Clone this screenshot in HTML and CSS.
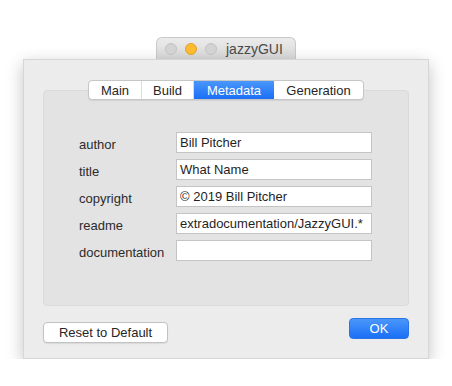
FILE: index.html
```html
<!DOCTYPE html>
<html lang="en">
<head>
    <meta charset="UTF-8">
    <meta name="viewport" content="width=device-width, initial-scale=1.0">
    <title>jazzyGUI</title>
    <link rel="stylesheet" href="styles.css">
</head>
<body>
    <div class="stage">
        <div class="titletab">
            <span class="light"></span>
            <span class="light yellow"></span>
            <span class="light"></span>
            <span class="title">jazzyGUI</span>
        </div>

        <div class="window">
            <div class="tabs">
                <span class="tab tab-main">Main</span>
                <span class="tab tab-build">Build</span>
                <span class="tab tab-meta selected">Metadata</span>
                <span class="tab tab-gen">Generation</span>
            </div>

            <div class="panel">
                <div class="form">
                    <label>author</label>
                    <div class="field">Bill Pitcher</div>
                    <label>title</label>
                    <div class="field">What Name</div>
                    <label>copyright</label>
                    <div class="field">© 2019 Bill Pitcher</div>
                    <label>readme</label>
                    <div class="field">extradocumentation/JazzyGUI.*</div>
                    <label>documentation</label>
                    <div class="field"></div>
                </div>
            </div>

            <div class="actions">
                <button class="button reset">Reset to Default</button>
                <button class="button ok">OK</button>
            </div>
        </div>
    </div>
</body>
</html>
```

FILE: styles.css
```css
body {
    margin: 0;
    background: #ffffff;
    font-family: "Liberation Sans", Arial, sans-serif;
    font-size: 13px;
    color: #262626;
}
.stage {
    width: 406px;
    padding: 37px 0 0 23px;
}
.titletab {
    width: 140px;
    height: 22px;
    margin: 0 auto;
    box-sizing: border-box;
    border: 1px solid #c9c9c9;
    border-bottom: none;
    border-radius: 6px 6px 0 0;
    background: linear-gradient(#ebebeb, #d9d9d9);
    display: flex;
    align-items: center;
    padding-left: 8px;
}
.light {
    width: 12px;
    height: 12px;
    box-sizing: border-box;
    border-radius: 50%;
    background: #d3d3d3;
    border: 1px solid #c2c2c2;
    margin-right: 8px;
}
.light.yellow {
    background: #fdbc2f;
    border-color: #e0a22a;
}
.title {
    margin-left: 1px;
    font-size: 14px;
    color: #4a4a4a;
}
.window {
    height: 300px;
    box-sizing: border-box;
    background: #ececec;
    border: 1px solid #d6d6d6;
    box-shadow: 0 5px 16px rgba(0, 0, 0, 0.24);
    padding: 20px 19px 0 19px;
}
.tabs {
    position: relative;
    z-index: 1;
    width: 276px;
    height: 20px;
    margin: 0 auto;
    box-sizing: border-box;
    display: flex;
    background: #ffffff;
    border: 1px solid #c6c6c6;
    border-radius: 4px;
    box-shadow: 0 1px 1px rgba(0, 0, 0, 0.08);
    overflow: hidden;
}
.tab {
    box-sizing: border-box;
    display: flex;
    align-items: center;
    justify-content: center;
    border-right: 1px solid #dcdcdc;
    color: #262626;
}
.tab-main { width: 53px; }
.tab-build { width: 52px; }
.tab-meta { width: 80px; border-right: none; }
.tab-gen { flex: 1; border-right: none; }
.tab.selected {
    background: linear-gradient(#4a97fb, #1a6ff5);
    color: #ffffff;
}
.panel {
    height: 216px;
    margin-top: -10px;
    box-sizing: border-box;
    background: #e3e3e3;
    border: 1px solid #dadada;
    border-radius: 4px;
    padding: 41px 0 0 35px;
}
.form {
    display: grid;
    grid-template-columns: 97px 196px;
    grid-auto-rows: 21px;
    row-gap: 6px;
    align-items: center;
}
.form label {
    padding-top: 4px;
    color: #2b2b2b;
}
.field {
    height: 21px;
    box-sizing: border-box;
    background: #ffffff;
    border: 1px solid #c4c4c4;
    padding: 2px 3px 0 3px;
    line-height: 16px;
    white-space: nowrap;
    overflow: hidden;
    color: #1f1f1f;
}
.actions {
    display: flex;
    justify-content: space-between;
    align-items: flex-start;
    margin-top: 12px;
}
.button {
    font-family: "Liberation Sans", Arial, sans-serif;
    font-size: 13px;
    height: 21px;
    box-sizing: border-box;
    padding: 0;
    border-radius: 4px;
    cursor: pointer;
}
.reset {
    width: 125px;
    margin-top: 4px;
    background: #ffffff;
    border: 1px solid #c2c2c2;
    color: #262626;
    box-shadow: 0 1px 1px rgba(0, 0, 0, 0.08);
}
.ok {
    width: 60px;
    background: linear-gradient(#4a97fb, #1a6ff5);
    border: 1px solid #2a74e8;
    color: #ffffff;
}
```
